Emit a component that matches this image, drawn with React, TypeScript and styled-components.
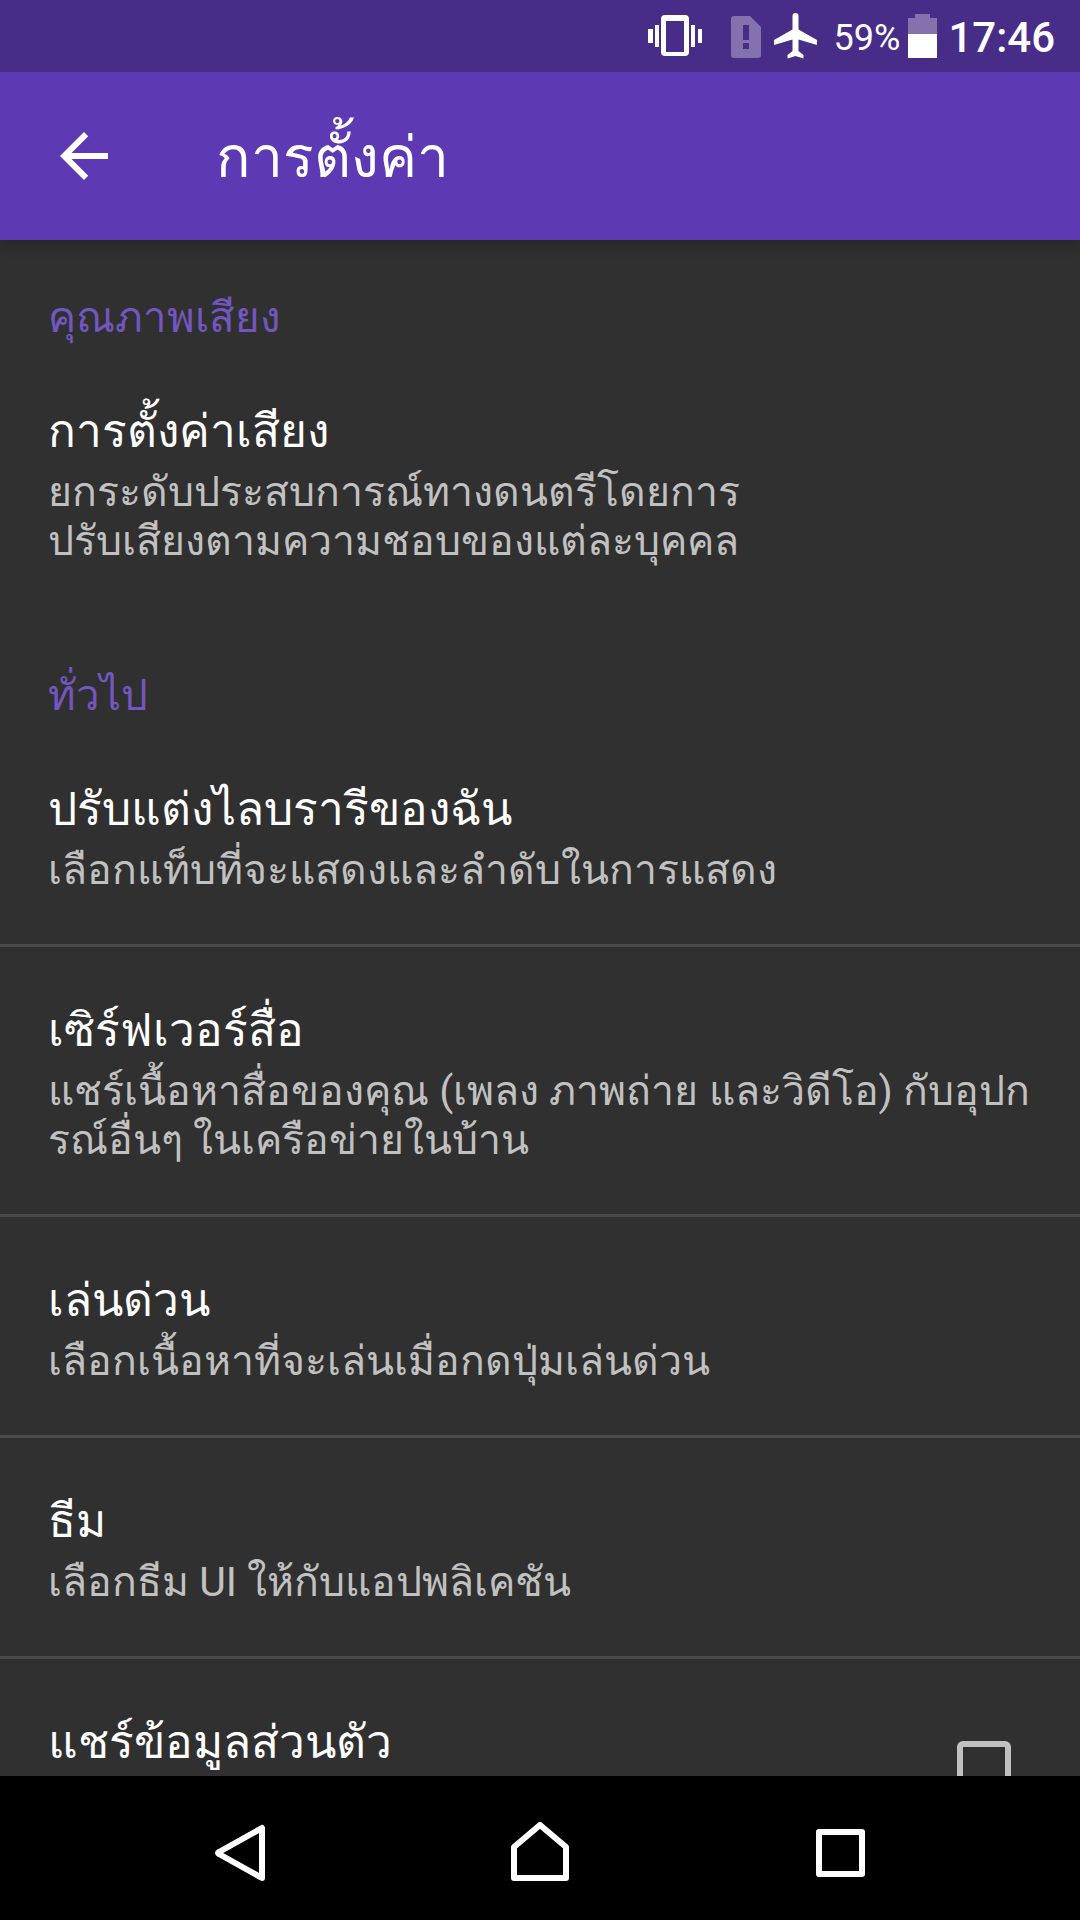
import React, { useState } from 'react';
import styled, { createGlobalStyle } from 'styled-components';

const GlobalStyle = createGlobalStyle`
  * { box-sizing: border-box; }
  body {
    margin: 0;
    background: #303030;
    font-family: Roboto, sans-serif;
  }
  button { font: inherit; color: inherit; background: none; border: 0; padding: 0; cursor: pointer; }
`;

const Screen = styled.div`
  display: flex;
  flex-direction: column;
  height: 100vh;
  overflow: hidden;
  background: #303030;
  color: #ffffff;
`;

const StatusBar = styled.div`
  flex: none;
  display: flex;
  align-items: center;
  justify-content: flex-end;
  height: 72px;
  padding-right: 25px;
  background: #472d87;
  svg { display: block; flex: none; }
`;

const BatteryLevel = styled.span`
  margin: 4px 8px 0 16px;
  font-size: 36px;
  line-height: 42px;
`;

const Clock = styled.time`
  margin: 4px 0 0 11px;
  font-size: 42px;
  font-weight: 500;
  line-height: 50px;
`;

const AppBar = styled.header`
  flex: none;
  display: flex;
  align-items: center;
  gap: 96px;
  height: 168px;
  padding: 0 48px;
  background: #5d3ab3;
  box-shadow: 0 4px 12px rgba(0, 0, 0, 0.25);
  clip-path: inset(0 0 -24px 0);
  z-index: 1;
`;

const IconButton = styled.button`
  display: flex;
  width: 72px;
  height: 72px;
`;

const Title = styled.h1`
  margin: 0;
  padding-top: 4px;
  font-size: 57px;
  font-weight: 400;
  line-height: 72px;
`;

const Content = styled.main`
  flex: 1;
  min-height: 0;
  overflow: hidden;
`;

const Category = styled.h2`
  margin: 0;
  padding: 54px 48px 6px;
  font-size: 42px;
  font-weight: 400;
  line-height: 48px;
  color: #7356bf;
`;

const List = styled.ul`
  list-style: none;
  margin: 0;
  padding: 0;
`;

const Item = styled.li<{ $divider?: boolean }>`
  border-bottom: 3px solid ${(p) => (p.$divider ? '#4a4a4a' : 'transparent')};
`;

const Row = styled.button`
  display: block;
  width: 100%;
  padding: 54px 48px 49px;
  text-align: left;
`;

const CheckRow = styled.label`
  display: flex;
  align-items: center;
  justify-content: space-between;
  min-height: 218px;
  padding: 54px 69px 54px 48px;
`;

const ItemTitle = styled.span`
  display: block;
  align-self: flex-start;
  font-size: 46px;
  line-height: 58px;
`;

const Summary = styled.span`
  display: block;
  padding-top: 8px;
  font-size: 41px;
  line-height: 49px;
  color: #c1c1c1;
  white-space: pre;
`;

const CheckBox = styled.input`
  appearance: none;
  width: 54px;
  height: 54px;
  margin: 0;
  border: 6px solid #c1c1c1;
  border-radius: 6px;
  &:checked { background: #7356bf; }
`;

const NavBar = styled.nav`
  flex: none;
  display: flex;
  justify-content: center;
  gap: 156px;
  height: 144px;
  background: #000000;
`;

const NavButton = styled.button`
  display: flex;
  align-items: center;
  justify-content: center;
  width: 144px;
  height: 144px;
  padding-top: 8px;
`;

type Entry = { title: string; summary: string };

const audio: Entry[] = [
  { title: 'การตั้งค่าเสียง', summary: 'ยกระดับประสบการณ์ทางดนตรีโดยการ\nปรับเสียงตามความชอบของแต่ละบุคคล' },
];

const general: Entry[] = [
  { title: 'ปรับแต่งไลบรารีของฉัน', summary: 'เลือกแท็บที่จะแสดงและลำดับในการแสดง' },
  { title: 'เซิร์ฟเวอร์สื่อ', summary: 'แชร์เนื้อหาสื่อของคุณ (เพลง ภาพถ่าย และวิดีโอ) กับอุปก\nรณ์อื่นๆ ในเครือข่ายในบ้าน' },
  { title: 'เล่นด่วน', summary: 'เลือกเนื้อหาที่จะเล่นเมื่อกดปุ่มเล่นด่วน' },
  { title: 'ธีม', summary: 'เลือกธีม UI ให้กับแอปพลิเคชัน' },
];

const Setting = ({ entry, divider }: { entry: Entry; divider?: boolean }) => (
  <Item $divider={divider}>
    <Row type="button">
      <ItemTitle>{entry.title}</ItemTitle>
      <Summary>{entry.summary}</Summary>
    </Row>
  </Item>
);

const StatusIcons = () => (
  <svg width="170" height="72" viewBox="648 0 170 72" aria-hidden="true" fill="#fff">
    <path fillRule="evenodd" d="M665 15h20a4 4 0 0 1 4 4v33a4 4 0 0 1-4 4h-20a4 4 0 0 1-4-4V19a4 4 0 0 1 4-4zm1 6v31h18V21z" />
    <path d="M648 29h5v14h-5zM655 25h4v22h-4zM691 25h4v22h-4zM698 29h4v14h-4z" />
    <path fillOpacity=".33" fillRule="evenodd" d="M734 16h16l11 11v28a3 3 0 0 1-3 3h-24a3 3 0 0 1-3-3V19a3 3 0 0 1 3-3zm9 9v15h6V25zm0 18v6h6v-6z" />
    <path d="M795.500 13a3 3 0 0 1 3 3v13.500L817 40v5l-18.500-5.500V51l5 4v3.500l-8-2.500-8 2.500V55l5-4V39.500L774 45v-5l18.500-10.500V16a3 3 0 0 1 3-3z" />
  </svg>
);

export default function App() {
  const [share, setShare] = useState(false);
  return (
    <Screen lang="th">
      <GlobalStyle />
      <StatusBar>
        <StatusIcons />
        <BatteryLevel>59%</BatteryLevel>
        <svg width="29" height="44" viewBox="0 0 29 44" aria-hidden="true" fill="#fff">
          <path fillOpacity=".33" d="M7 0h15v4h7v16H0V4h7z" />
          <path d="M0 20h29v24H0z" />
        </svg>
        <Clock>17:46</Clock>
      </StatusBar>
      <AppBar>
        <IconButton type="button" aria-label="กลับ">
          <svg width="72" height="72" viewBox="0 0 24 24" fill="#fff">
            <path d="M20 11H7.830l5.590-5.590L12 4l-8 8 8 8 1.410-1.410L7.830 13H20z" />
          </svg>
        </IconButton>
        <Title>การตั้งค่า</Title>
      </AppBar>
      <Content>
        <Category>คุณภาพเสียง</Category>
        <List>
          {audio.map((e) => <Setting key={e.title} entry={e} />)}
        </List>
        <Category>ทั่วไป</Category>
        <List>
          {general.map((e) => <Setting key={e.title} entry={e} divider />)}
          <Item>
            <CheckRow>
              <ItemTitle>แชร์ข้อมูลส่วนตัว</ItemTitle>
              <CheckBox type="checkbox" checked={share} onChange={() => setShare(!share)} />
            </CheckRow>
          </Item>
        </List>
      </Content>
      <NavBar>
        <NavButton type="button" aria-label="ย้อนกลับ">
          <svg width="60" height="60" viewBox="0 0 60 60" fill="none" stroke="#fff" strokeWidth="6" strokeLinejoin="round">
            <path d="M52 6v50L9 32q-2-1 0-2z" />
          </svg>
        </NavButton>
        <NavButton type="button" aria-label="หน้าหลัก">
          <svg width="60" height="60" viewBox="0 0 60 60" fill="none" stroke="#fff" strokeWidth="6" strokeLinejoin="round">
            <path d="M4 56V25L30 3l26 22v31z" />
          </svg>
        </NavButton>
        <NavButton type="button" aria-label="แอปล่าสุด">
          <svg width="60" height="60" viewBox="0 0 60 60" fill="none" stroke="#fff" strokeWidth="6" strokeLinejoin="round">
            <path d="M9 10h43v42H9z" />
          </svg>
        </NavButton>
      </NavBar>
    </Screen>
  );
}
